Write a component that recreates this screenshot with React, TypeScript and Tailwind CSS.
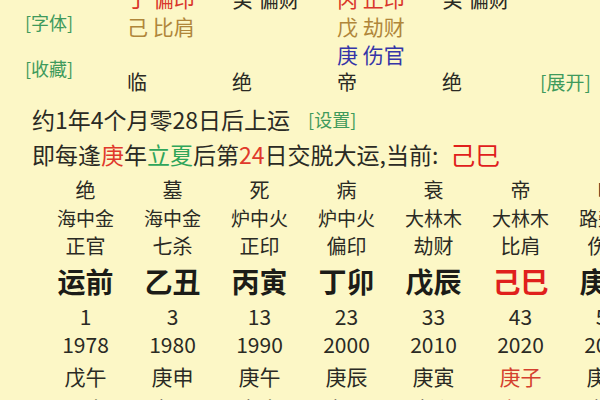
const font = "font-['Noto_Sans_CJK_SC','Noto_Sans',sans-serif]";

type Cell = { text: string; color?: string };

const topRows: Cell[][] = [
  [
    { text: "丁 偏印", color: "text-[#d9362b]" },
    { text: "癸 偏财" },
    { text: "丙 正印", color: "text-[#d9362b]" },
    { text: "癸 偏财" },
  ],
  [{ text: "己 比肩", color: "text-[#b0863a]" }, { text: "" }, { text: "戊 劫财", color: "text-[#b0863a]" }, { text: "" }],
  [{ text: "" }, { text: "" }, { text: "庚 伤官", color: "text-[#3535a8]" }, { text: "" }],
];

const states = ["临", "绝", "帝", "绝"];

type Pillar = {
  stage: string;
  nayin: string;
  god: string;
  gz: string;
  age: string;
  year: string;
  ly1: string;
  ly2: string;
  current?: boolean;
};

const pillars: Pillar[] = [
  { stage: "绝", nayin: "海中金", god: "正官", gz: "运前", age: "1", year: "1978", ly1: "戊午", ly2: "己未" },
  { stage: "墓", nayin: "海中金", god: "七杀", gz: "乙丑", age: "3", year: "1980", ly1: "庚申", ly2: "辛酉" },
  { stage: "死", nayin: "炉中火", god: "正印", gz: "丙寅", age: "13", year: "1990", ly1: "庚午", ly2: "辛未" },
  { stage: "病", nayin: "炉中火", god: "偏印", gz: "丁卯", age: "23", year: "2000", ly1: "庚辰", ly2: "辛巳" },
  { stage: "衰", nayin: "大林木", god: "劫财", gz: "戊辰", age: "33", year: "2010", ly1: "庚寅", ly2: "辛卯" },
  { stage: "帝", nayin: "大林木", god: "比肩", gz: "己巳", age: "43", year: "2020", ly1: "庚子", ly2: "辛丑", current: true },
  { stage: "临", nayin: "路旁土", god: "伤官", gz: "庚午", age: "53", year: "2030", ly1: "庚戌", ly2: "辛亥" },
];

function PillarColumn({ p }: { p: Pillar }) {
  return (
    <div className="flex w-[87px] shrink-0 flex-col items-center whitespace-nowrap">
      <div className="h-[28px] text-[20px] leading-[28px]">{p.stage}</div>
      <div className="h-[28px] text-[19px] leading-[28px]">{p.nayin}</div>
      <div className="h-[28px] text-[20px] leading-[28px]">{p.god}</div>
      <div className={`h-[42px] text-[28px] font-bold leading-[42px] ${p.current ? "text-[#e0201c]" : "text-[#1c1c18]"}`}>
        {p.gz}
      </div>
      <div className="h-[28px] text-[21px] leading-[28px]">{p.age}</div>
      <div className="h-[28px] text-[21px] leading-[28px]">{p.year}</div>
      <div className={`h-[36px] text-[21px] leading-[36px] ${p.current ? "text-[#d4402e]" : ""}`}>{p.ly1}</div>
      <div className={`h-[28px] text-[21px] leading-[28px] ${p.current ? "text-[#d4402e]" : ""}`}>{p.ly2}</div>
    </div>
  );
}

export default function App() {
  return (
    <div className={`h-[400px] w-[600px] overflow-hidden bg-[#fcf7c6] text-[#2a2a24] ${font}`}>
      {/* chart header, first row is scrolled off the top */}
      <div className="-mt-[16px] flex">
        <div className="flex w-[127px] shrink-0 flex-col pl-[25px] text-[18px] leading-[24px] text-[#3f9a5c]">
          <div className="mt-[26px]">[字体]</div>
          <div className="mt-[22px]">[收藏]</div>
        </div>
        <div className="flex flex-col">
          {topRows.map((row, i) => (
            <div key={i} className="flex h-[28px] text-[21px] leading-[28px]">
              {row.map((c, j) => (
                <div key={j} className={`w-[105px] whitespace-nowrap ${c.color ?? ""}`}>
                  {c.text}
                </div>
              ))}
            </div>
          ))}
          <div className="flex h-[28px] text-[20px] leading-[28px]">
            {states.map((s, j) => (
              <div key={j} className="w-[105px]">
                {s}
              </div>
            ))}
            <div className="-ml-[7px] text-[19px] text-[#3f9a5c]">[展开]</div>
          </div>
        </div>
      </div>

      <div className="mt-[5px] pl-[32px]">
        <div className="flex h-[36px] items-center text-[23px] leading-[36px]">
          <span>约1年4个月零28日后上运</span>
          <span className="ml-[18px] text-[18px] text-[#3f9a5c]">[设置]</span>
        </div>
        <div className="flex h-[34px] items-center whitespace-nowrap text-[23px] leading-[34px]">
          <span>即每逢</span>
          <span className="text-[#e0392b]">庚</span>
          <span>年</span>
          <span className="text-[#2fa55a]">立夏</span>
          <span>后第</span>
          <span className="text-[#e0392b]">24</span>
          <span>日交脱大运,当前:</span>
          <span className="ml-[12px] text-[25px] text-[#e0201c]">己巳</span>
        </div>
      </div>

      <div className="mt-[5px] flex pl-[42px]">
        {pillars.map((p) => (
          <PillarColumn key={p.year} p={p} />
        ))}
      </div>
    </div>
  );
}
